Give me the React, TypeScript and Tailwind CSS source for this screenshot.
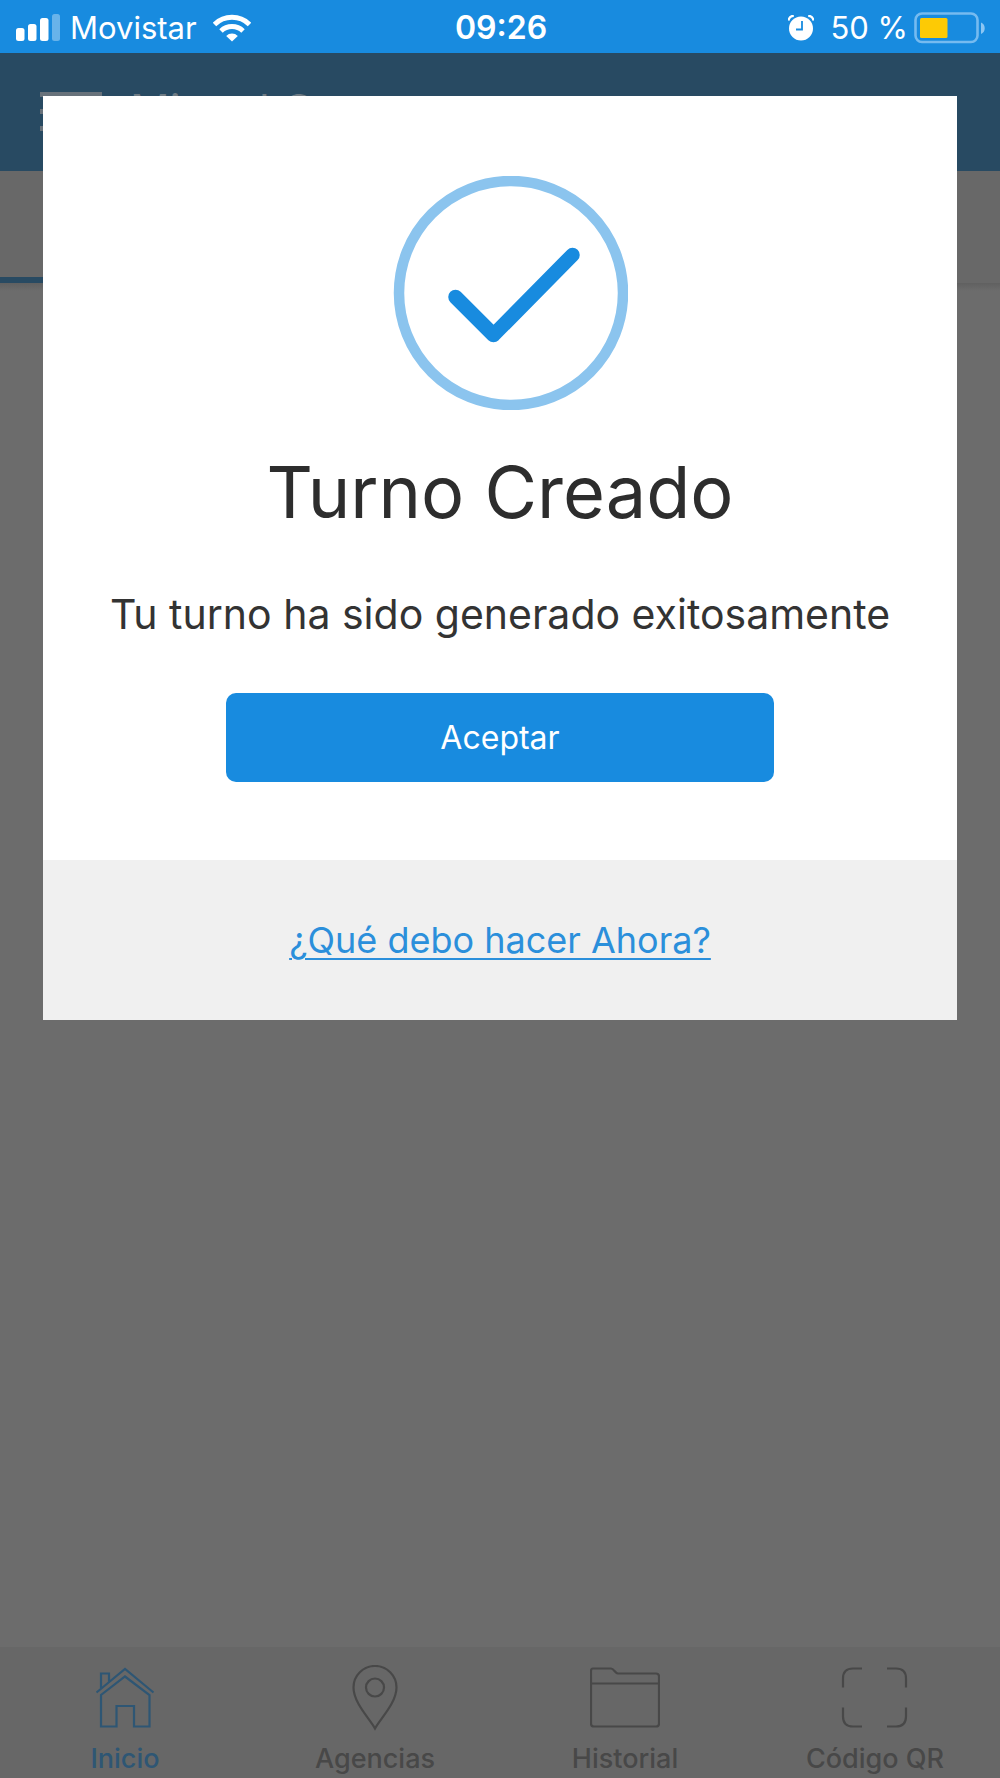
import React from "react";

function StatusBar() {
  return (
    <div className="grid h-[53px] shrink-0 grid-cols-[1fr_auto_1fr] items-center bg-[#188bdf] pt-0.5 pl-4 pr-[14px] text-[32px] leading-9 text-white">
      <div className="flex items-center">
        <svg width="44" height="28" viewBox="0 0 44 28" fill="#fff" aria-hidden="true">
          <rect x="0" y="14" width="8.5" height="13" rx="2.5" />
          <rect x="12" y="10" width="8.5" height="17" rx="2.5" />
          <rect x="24" y="4" width="8.5" height="23" rx="2.5" />
          <rect x="36" y="0" width="8" height="27" rx="2.5" opacity=".35" />
        </svg>
        <span className="ml-2.5 text-[31px]">Movistar</span>
        <svg className="ml-4" width="38" height="28" viewBox="0 0 38 28" fill="none" stroke="#fff" aria-hidden="true">
          <path d="M1.5 10.5a25 25 0 0 1 35 0" strokeWidth="5" />
          <path d="M8 17a16 16 0 0 1 22 0" strokeWidth="5" />
          <path d="M19 27.5l-5.8-5.6a8.5 8.5 0 0 1 11.6 0z" fill="#fff" stroke="none" />
        </svg>
      </div>
      <time className="font-semibold">09:26</time>
      <div className="flex items-center justify-end">
        <svg width="26" height="26" viewBox="0 0 26 26" aria-hidden="true">
          <circle cx="13" cy="13.5" r="12" fill="#fff" />
          <path d="M.5 5.5C1 2.500 3 .8 5.800.8M25.500 5.500C25 2.500 23 .8 20.200.8" stroke="#fff" strokeWidth="2.200" fill="none" />
          <path d="M14 6v8.500H8" stroke="#188bdf" strokeWidth="1.800" fill="none" />
        </svg>
        <span className="ml-4 text-[31px]">50 %</span>
        <svg className="ml-1.5" width="72" height="32" viewBox="0 0 72 32" aria-hidden="true">
          <rect x="1.500" y="1.500" width="62" height="28.500" rx="6.500" fill="none" stroke="#76bbf0" strokeWidth="2.600" />
          <rect x="6" y="6" width="27.500" height="20" rx="1.500" fill="#fdca05" />
          <path d="M67 10.500c5 2 5 9.500 0 11.500z" fill="#8cc6f3" />
        </svg>
      </div>
    </div>
  );
}

function AppHeader() {
  return (
    <header className="flex h-[118px] shrink-0 items-start bg-[#284a62] px-10 pt-[39px] text-[#6f7b84]">
      <button type="button" aria-label="Menú" className="flex w-[62px] flex-col gap-3">
        <span className="h-[5px] w-full bg-[#68727b]" />
        <span className="h-[5px] w-full bg-[#68727b]" />
        <span className="h-[5px] w-full bg-[#68727b]" />
      </button>
      <span className="ml-7 text-[44px] leading-9">Miguel C</span>
    </header>
  );
}

const HomeIcon = () => (
  <svg width="70" height="66" viewBox="0 0 70 66" fill="none" stroke="currentColor" strokeWidth="2.200" aria-hidden="true">
    <path d="M6.500 27.500L35 4l28.500 23.500" />
    <path d="M11 30v31.500h15.500V41H44v20.500h15.500V30L35 11.500z" />
    <path d="M11 23V8.500h8v8" />
  </svg>
);

const PinIcon = () => (
  <svg width="70" height="66" viewBox="0 0 70 66" fill="none" stroke="currentColor" strokeWidth="2.200" aria-hidden="true">
    <path d="M35 63.500C30 54 13.500 38 13.500 22.500a21.500 21.500 0 0 1 43 0C56.500 38 40 54 35 63.500z" />
    <circle cx="35" cy="22.500" r="9" />
  </svg>
);

const FolderIcon = () => (
  <svg width="70" height="66" viewBox="0 0 70 66" fill="none" stroke="currentColor" strokeWidth="2.200" aria-hidden="true">
    <path d="M3 3.500h18c3 0 4 5 7 5h38q3 0 3 3V58.500q0 3-3 3H4q-3 0-3-3V6q0-2.500 2-2.500zM1 18.500h68" />
  </svg>
);

const ScanIcon = () => (
  <svg width="70" height="66" viewBox="0 0 70 66" fill="none" stroke="currentColor" strokeWidth="2.200" aria-hidden="true">
    <path d="M3 22.500v-9q0-10 10-10h9M47 3.500h9q10 0 10 10v9M66 42.500v9q0 10-10 10h-9M22 61.500h-9q-10 0-10-10v-9" />
  </svg>
);

const tabs = [
  { label: "Inicio", Icon: HomeIcon, active: true },
  { label: "Agencias", Icon: PinIcon, active: false },
  { label: "Historial", Icon: FolderIcon, active: false },
  { label: "Código QR", Icon: ScanIcon, active: false },
];

function BottomNav() {
  return (
    <nav className="grid h-[131px] shrink-0 grid-cols-4 bg-[#676767]">
      {tabs.map(({ label, Icon, active }) => (
        <a
          key={label}
          href="#"
          aria-current={active ? "page" : undefined}
          className={`flex flex-col items-center pt-[18px] text-[27px] leading-8 font-medium ${active ? "text-[#2e5674]" : "text-[#484848]"}`}
        >
          <Icon />
          <span className="mt-3">{label}</span>
        </a>
      ))}
    </nav>
  );
}

function SuccessDialog() {
  return (
    <div role="dialog" aria-modal="true" aria-labelledby="dialog-title" className="absolute inset-x-[43px] top-24 bg-white text-center text-[#2d2d2d]">
      <div className="flex flex-col items-center pt-20 pb-[78px]">
        <svg width="256" height="234" viewBox="0 0 256 234" fill="none" aria-hidden="true">
          <circle cx="139" cy="117" r="112" stroke="#8bc4ee" strokeWidth="10.500" />
          <path d="M83.500 121l38 38L200.500 79" stroke="#188bdf" strokeWidth="14.500" strokeLinecap="round" strokeLinejoin="round" />
        </svg>
        <h1 id="dialog-title" className="mt-9 text-[72px] leading-[92px]">Turno Creado</h1>
        <p className="mt-[50px] text-[41px] leading-[52px] text-[#333]">Tu turno ha sido generado exitosamente</p>
        <button type="button" className="mt-[53px] h-[89px] w-3/5 rounded-[10px] bg-[#188bdf] text-[32px] text-white">
          Aceptar
        </button>
      </div>
      <div className="flex h-40 items-center justify-center bg-[#f0f0f0]">
        <a href="#" className="text-[36px] text-[#2b8fdb] underline decoration-2 underline-offset-[5px]">
          ¿Qué debo hacer Ahora?
        </a>
      </div>
    </div>
  );
}

export default function App() {
  return (
    <div className="relative flex min-h-screen flex-col bg-[#6c6c6c] font-['Inter',sans-serif]">
      <StatusBar />
      <AppHeader />
      <div className="flex h-28 shrink-0 flex-col justify-end bg-[#686868]">
        <div className="h-[6px] w-1/2 bg-[#284a62]" />
      </div>
      <div className="h-2 shrink-0 bg-gradient-to-b from-[#606060] to-[#6c6c6c]" />
      <main className="grow" />
      <BottomNav />
      <SuccessDialog />
    </div>
  );
}
